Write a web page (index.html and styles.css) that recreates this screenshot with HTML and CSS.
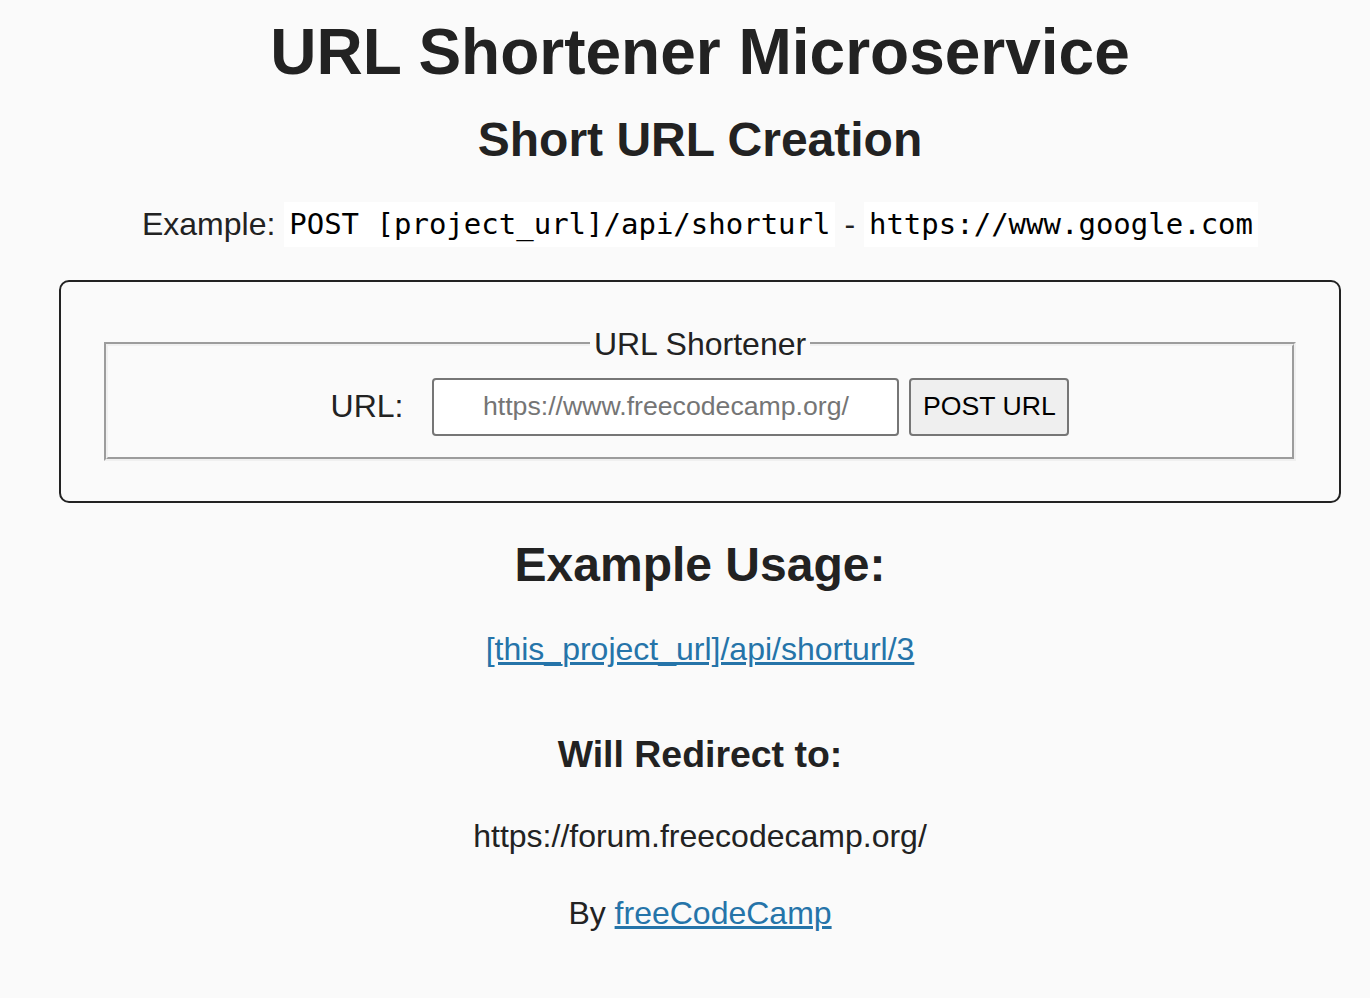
FILE: index.html
```html
<!DOCTYPE html>
<html lang="en">
<head>
<meta charset="utf-8">
<title>URL Shortener Microservice</title>
<link rel="stylesheet" href="styles.css">
</head>
<body>
<div class="page">
  <h1 class="title">URL Shortener Microservice</h1>
  <h2 class="subtitle">Short URL Creation</h2>
  <p class="example">Example: <code class="code">POST [project_url]/api/shorturl</code> - <code class="code">https://www.google.com</code></p>
  <form class="form" action="api/shorturl" method="POST">
    <fieldset class="fieldset">
      <legend class="legend">URL Shortener</legend>
      <div class="row">
        <label class="label" for="url_input">URL:</label>
        <input class="input" id="url_input" type="text" name="url" placeholder="https://www.freecodecamp.org/">
        <input class="button" type="submit" value="POST URL">
      </div>
    </fieldset>
  </form>
  <h2 class="usage">Example Usage:</h2>
  <p class="usage-link"><a class="link" href="#">[this_project_url]/api/shorturl/3</a></p>
  <h3 class="redirect">Will Redirect to:</h3>
  <p class="target">https://forum.freecodecamp.org/</p>
  <p class="footer">By <a class="link" href="#">freeCodeCamp</a></p>
</div>
</body>
</html>
```

FILE: styles.css
```css
html {
  background: #fafafa;
}

body {
  margin: 0;
  font-family: "Liberation Sans", Arial, sans-serif;
  color: #222;
  background: #fafafa;
  text-align: center;
}

.page {
  display: flow-root;
  padding: 0 0 0 30px;
}

.title {
  margin: 15px 0 0;
  font-size: 64px;
  line-height: 74px;
  font-weight: bold;
}

.subtitle {
  margin: 23.4px 0 0;
  font-size: 48px;
  line-height: 56px;
  font-weight: bold;
}

.example {
  margin: 34px 0 0;
  font-size: 32px;
  line-height: 45px;
}

.code {
  display: inline-block;
  vertical-align: top;
  font-family: "DejaVu Sans Mono", "Liberation Mono", monospace;
  font-size: 29px;
  line-height: 45px;
  padding: 0 5px;
  background: #fff;
  color: #000;
}

.form {
  box-sizing: border-box;
  width: 1282px;
  margin: 32.5px auto 0;
  border: 2px solid #222;
  border-radius: 10px;
  padding: 38.5px 43px 40px;
}

.fieldset {
  margin: 0;
  min-width: 0;
  border: 4px groove #f0f0f0;
  padding: 10.5px 0 21px;
}

.legend {
  margin: 0 auto;
  padding: 2px 4px 0;
  font-size: 32px;
  line-height: 45px;
}

.row {
  display: flex;
  justify-content: center;
  align-items: center;
}

.label {
  font-size: 32px;
  line-height: 45px;
  margin-right: 29px;
}

.input {
  box-sizing: border-box;
  width: 467px;
  height: 58px;
  margin: 0 10px 0 0;
  padding: 0 4px;
  border: 2px solid #767676;
  border-radius: 4px;
  background: #fff;
  color: #000;
  font-family: "Liberation Sans", Arial, sans-serif;
  font-size: 26.67px;
  text-align: center;
}

.input::placeholder {
  color: #757575;
}

.button {
  box-sizing: border-box;
  width: 160px;
  height: 58px;
  margin: 0;
  padding: 0;
  border: 2px solid #767676;
  border-radius: 4px;
  background: #efefef;
  color: #000;
  font-family: "Liberation Sans", Arial, sans-serif;
  font-size: 26.67px;
}

.usage {
  margin: 34.4px 0 0;
  font-size: 48px;
  line-height: 56px;
  font-weight: bold;
}

.usage-link {
  margin: 34px 0 0;
  font-size: 32px;
  line-height: 45px;
}

.redirect {
  margin: 60px 0 0;
  font-size: 37.44px;
  line-height: 45px;
  font-weight: bold;
}

.target {
  margin: 37px 0 0;
  font-size: 32px;
  line-height: 45px;
}

.footer {
  margin: 32px 0 0;
  font-size: 32px;
  line-height: 45px;
}

.link {
  color: #2574a9;
}
```
